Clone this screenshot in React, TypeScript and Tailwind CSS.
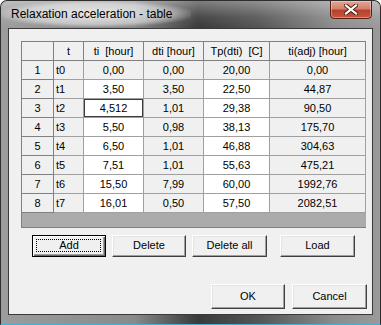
import React from 'react';

const FONT = { fontFamily: '"Liberation Sans", Arial, sans-serif' };

const COLS = ['w-[32px]', 'w-[30px]', 'w-[60px]', 'w-[60px]', 'w-[66px]', 'w-[96px]'];

const HEADERS = ['', 't', 'ti  [hour]', 'dti [hour]', 'Tp(dti)  [C]', 'ti(adj) [hour]'];

const ROWS = [
  ['1', 't0', '0,00', '0,00', '20,00', '0,00'],
  ['2', 't1', '3,50', '3,50', '22,50', '44,87'],
  ['3', 't2', '4,512', '1,01', '29,38', '90,50'],
  ['4', 't3', '5,50', '0,98', '38,13', '175,70'],
  ['5', 't4', '6,50', '1,01', '46,88', '304,63'],
  ['6', 't5', '7,51', '1,01', '55,63', '475,21'],
  ['7', 't6', '15,50', '7,99', '60,00', '1992,76'],
  ['8', 't7', '16,01', '0,50', '57,50', '2082,51'],
];

function Btn({ label, w, h = 'h-[22px]', focused = false }: { label: string; w: string; h?: string; focused?: boolean }) {
  return (
    <div
      className={`relative ${w} ${h} flex items-center justify-center text-[11px] text-black bg-[#f0f0f0] ${
        focused
          ? 'border border-black shadow-[inset_1px_1px_0_#ffffff,inset_-1px_-1px_0_#696969,inset_-2px_-2px_0_#a0a0a0]'
          : 'border border-t-white border-l-white border-r-[#404040] border-b-[#404040] shadow-[inset_-1px_-1px_0_#a0a0a0,inset_1px_1px_0_#e3e3e3]'
      }`}
    >
      {focused && <span className="absolute left-[3px] right-[4px] top-[3px] bottom-[4px] border border-dotted border-black" />}
      <span className="relative -mt-[1px]">{label}</span>
    </div>
  );
}

export default function App() {
  return (
    <div className="w-[381px] h-[325px] bg-white" style={FONT}>
      <div className="relative w-[381px] h-[325px] rounded-t-[7px] border border-[#2e2e2e] border-b-[#3fb3d3] flex flex-col overflow-hidden bg-[linear-gradient(90deg,#9c9c9c_0%,#8a8a8a_35%,#3a3a3a_52%,#555_68%,#8c8c8c_88%,#9a9a9a_100%)]">
        {/* Title bar */}
        <div className="relative h-[27px] flex items-center pl-[10px] bg-[linear-gradient(180deg,rgba(255,255,255,0.35)_0%,rgba(255,255,255,0.08)_60%,rgba(0,0,0,0)_100%)]">
          <span className="absolute left-0 top-0 w-[190px] h-[26px] bg-[radial-gradient(ellipse_at_center,rgba(255,255,255,0.75)_0%,rgba(255,255,255,0.45)_55%,rgba(255,255,255,0)_75%)]" />
          <span className="relative text-[12px] text-black -mt-[2px]">Relaxation acceleration - table</span>
          <div className="absolute right-[8px] top-[-1px] w-[42px] h-[19px] rounded-b-[4px] border border-[#5a1d14] flex items-center justify-center bg-[linear-gradient(180deg,#e4a595_0%,#d2826d_45%,#b8402b_55%,#c8553d_100%)] shadow-[inset_0_0_0_1px_rgba(255,255,255,0.35)]">
            <svg width="14" height="11" viewBox="0 0 14 11">
              <path d="M2 1.5 L12 9.5 M12 1.5 L2 9.5" stroke="#4a1a12" strokeWidth="4" strokeLinecap="square" />
              <path d="M2 1.5 L12 9.5 M12 1.5 L2 9.5" stroke="#ffffff" strokeWidth="2.2" strokeLinecap="square" />
            </svg>
          </div>
        </div>

        {/* Client area */}
        <div className="ml-[7px] mr-[7px] mb-[9px] flex-1 border border-[#3a3a3a] bg-[#f0f0f0] flex flex-col">
          <div className="ml-[12px] mt-[12px] w-[345px] border border-[#808080] border-r-0 flex flex-col">
            <div className="flex">
              {HEADERS.map((h, i) => (
                <div
                  key={i}
                  className={`${COLS[i]} h-[19px] border-r border-b border-[#808080] bg-[#f0f0f0] flex items-center justify-center text-[11px] text-black whitespace-pre`}
                >
                  {h}
                </div>
              ))}
            </div>
            {ROWS.map((r, ri) => (
              <div key={ri} className="flex">
                {r.map((c, ci) => {
                  const fixed = ci === 0;
                  const white = ri > 0 && (ci === 2 || ci === 4);
                  const selected = ri === 2 && ci === 2;
                  return (
                    <div
                      key={ci}
                      className={`${COLS[ci]} h-[19px] border-r border-b ${
                        fixed ? 'border-[#808080]' : 'border-[#a0a0a0]'
                      } ${white ? 'bg-white' : 'bg-[#f0f0f0]'} ${
                        selected ? 'shadow-[inset_0_0_0_1px_#3c3c3c]' : ''
                      } flex items-center ${ci === 1 ? 'justify-start pl-[2px]' : 'justify-center'} text-[11px] text-black`}
                    >
                      {c}
                    </div>
                  );
                })}
              </div>
            ))}
            <div className="h-[14px] bg-[#ababab]" />
          </div>

          <div className="flex mt-[7px] ml-[23px]">
            <Btn label="Add" w="w-[74px]" focused />
            <div className="ml-[6px]">
              <Btn label="Delete" w="w-[74px]" />
            </div>
            <div className="ml-[6px]">
              <Btn label="Delete all" w="w-[75px]" />
            </div>
            <div className="ml-[13px]">
              <Btn label="Load" w="w-[75px]" />
            </div>
          </div>

          <div className="flex justify-end mt-[27px] mr-[5px] gap-[7px]">
            <Btn label="OK" w="w-[74px]" h="h-[25px]" />
            <Btn label="Cancel" w="w-[75px]" h="h-[25px]" />
          </div>
        </div>
      </div>
    </div>
  );
}
